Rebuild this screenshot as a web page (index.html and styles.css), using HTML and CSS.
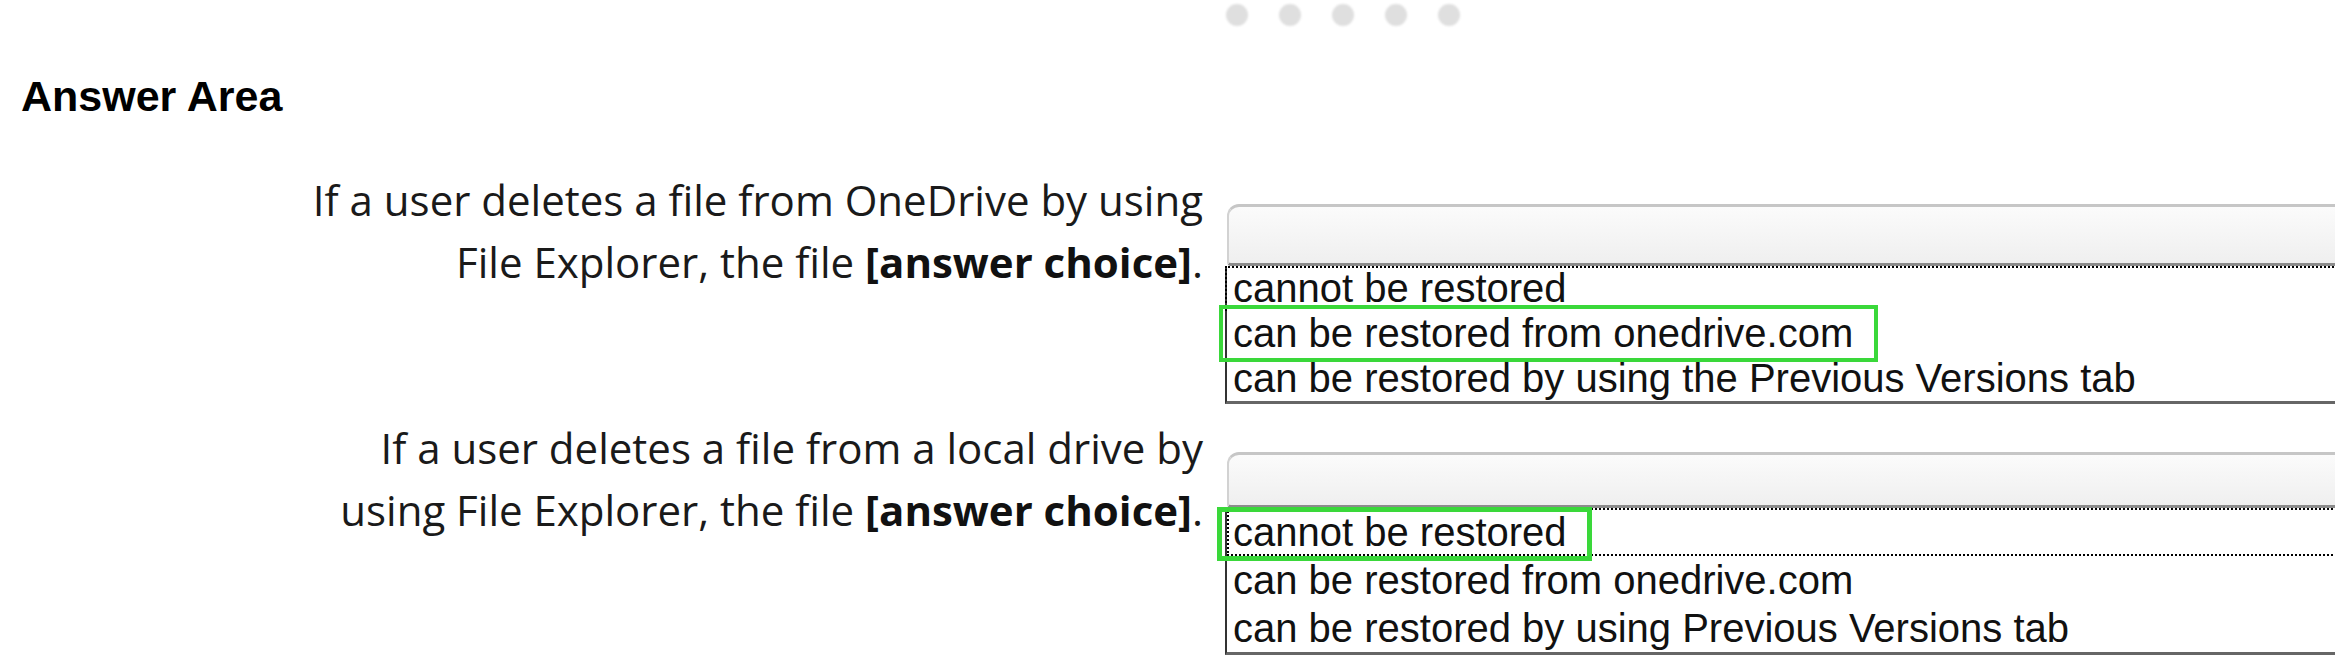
FILE: index.html
```html
<!DOCTYPE html>
<html lang="en">
<head>
  <meta charset="UTF-8" />
  <title>Answer Area</title>
  <link rel="stylesheet" href="styles.css">
</head>
<body>
  <div class="dots">
    <span class="dot"></span>
    <span class="dot"></span>
    <span class="dot"></span>
    <span class="dot"></span>
    <span class="dot"></span>
  </div>

  <h1 class="title">Answer Area</h1>

  <div class="item item-first">
    <p class="statement">If a user deletes a file from OneDrive by using<br>File Explorer, the file <strong>[answer choice]</strong>.</p>
    <div class="select">
      <div class="combo"></div>
      <ul class="options options-tight">
        <li class="opt focus-top">cannot be restored</li>
        <li class="opt"><span class="pick pick-a">can be restored from onedrive.com</span></li>
        <li class="opt">can be restored by using the Previous Versions tab</li>
      </ul>
    </div>
  </div>

  <div class="item item-second">
    <p class="statement">If a user deletes a file from a local drive by<br>using File Explorer, the file <strong>[answer choice]</strong>.</p>
    <div class="select">
      <div class="combo combo-short"></div>
      <ul class="options">
        <li class="opt focus-row"><span class="pick pick-b">cannot be restored</span></li>
        <li class="opt">can be restored from onedrive.com</li>
        <li class="opt">can be restored by using Previous Versions tab</li>
      </ul>
    </div>
  </div>
</body>
</html>
```

FILE: styles.css
```css
html, body {
  overflow: hidden;
}
body {
  margin: 0;
  background: #fff;
  color: #111;
  font-family: 'Liberation Sans', Arial, sans-serif;
}
.dots {
  display: flex;
  align-items: center;
  gap: 31px;
  height: 30px;
  padding-left: 1226px;
}
.dot {
  width: 22px;
  height: 22px;
  border-radius: 50%;
  background: #dfdfdf;
  filter: blur(1px);
}
.title {
  margin: 42px 0 0;
  padding-left: 21px;
  font: 700 43px/48px 'Liberation Sans', Arial, sans-serif;
  color: #000;
}
.item {
  display: flex;
  align-items: flex-start;
  gap: 22px;
}
.item-first {
  margin-top: 84px;
}
.item-second {
  margin-top: 48px;
}
.statement {
  flex: none;
  width: 1203px;
  margin: -35px 0 0;
  text-align: right;
  font: 400 42px/62px 'Open Sans', Lato, sans-serif;
  color: #1a1a1a;
}
.statement strong {
  font-weight: 700;
  color: #111;
}
.select {
  flex: none;
  width: 1300px;
}
.combo {
  height: 56px;
  border-top: 3px solid #c6c6c6;
  border-left: 2px solid #d2d2d2;
  border-bottom: 3px solid #8c8c8c;
  border-radius: 12px 0 0 4px;
  margin-left: 2px;
  background: linear-gradient(#fbfbfb, #efefef);
}
.combo-short {
  height: 50px;
}
.options {
  list-style: none;
  margin: 0;
  padding: 0;
  border-left: 2px solid #333;
  border-bottom: 3px solid #666;
  background: #fff;
}
.opt {
  height: 48px;
  padding-left: 6px;
  font-size: 40px;
  line-height: 48px;
  white-space: nowrap;
  color: #111;
}
.options-tight .opt {
  height: 45px;
  line-height: 45px;
}
.focus-top {
  border-top: 2px dotted #000;
  margin-left: -2px;
  border-left: 2px dotted #000;
  height: 43px !important;
  line-height: 41px !important;
}
.focus-row {
  outline: 2px dotted #000;
  outline-offset: -2px;
}
.pick {
  position: relative;
}
.pick::after {
  content: "";
  position: absolute;
  border: 4px solid #3ad83a;
}
.pick-a::after {
  left: -14px;
  right: -25px;
  top: -6px;
  bottom: -7px;
}
.pick-b::after {
  left: -16px;
  right: -25px;
  top: -3px;
  bottom: -7px;
  border-width: 5px;
}
```
